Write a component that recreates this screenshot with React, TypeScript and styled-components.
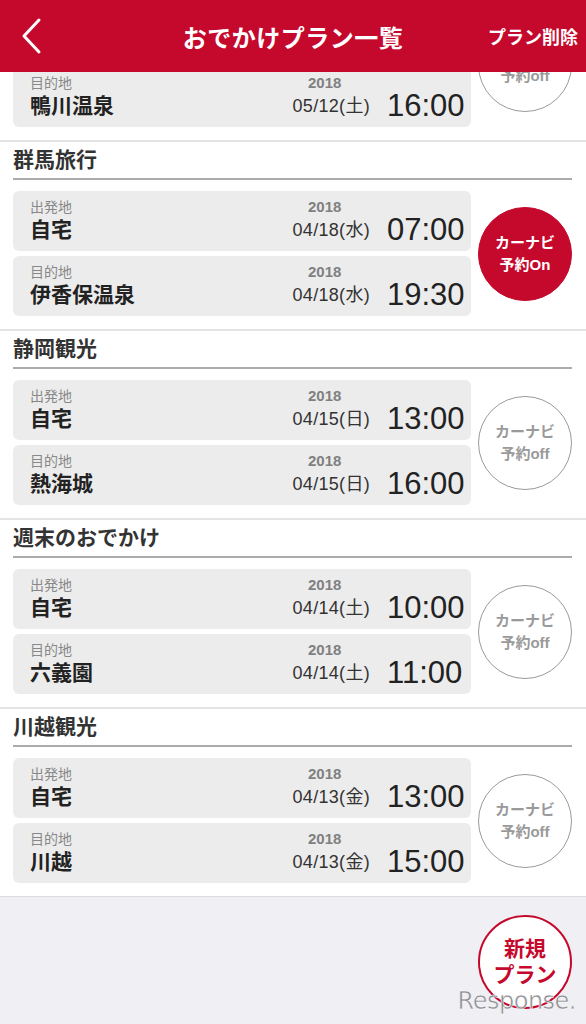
import { useLayoutEffect, useRef } from "react"
import styled, { createGlobalStyle } from "styled-components"

const RED = "#c5092d"

const GlobalStyle = createGlobalStyle`
  html, body {
    margin: 0;
    padding: 0;
    overflow: hidden;
    background: #ffffff;
  }
  body {
    font-family: "Liberation Sans", "Noto Sans CJK JP", sans-serif;
  }
`

const Screen = styled.div`
  width: 586px;
  height: 1024px;
  display: flex;
  flex-direction: column;
  overflow: hidden;
`

const Header = styled.header`
  position: relative;
  z-index: 1;
  flex: 0 0 72px;
  display: grid;
  grid-template-columns: 100px 1fr 100px;
  align-items: center;
  background: ${RED};
  color: #ffffff;
`

const BackButton = styled.button`
  display: flex;
  align-items: center;
  padding: 0 0 0 20px;
  height: 72px;
  border: none;
  background: none;
  cursor: pointer;
`

const Title = styled.h1`
  margin: 0;
  text-align: center;
  font-size: 24px;
  font-weight: 700;
  letter-spacing: 0.5px;
`

const DeleteButton = styled.button`
  justify-self: end;
  padding: 0 8px 0 0;
  border: none;
  background: none;
  color: #ffffff;
  font-family: inherit;
  font-size: 18px;
  font-weight: 700;
  white-space: nowrap;
`

const Scroller = styled.div`
  flex: 1;
  overflow-y: auto;
  scrollbar-width: none;
  &::-webkit-scrollbar {
    display: none;
  }
`

const Section = styled.section`
  border-top: 2px solid #e4e4e4;
  padding: 0 14px 13px 13px;
  background: #ffffff;
`

const SectionTitle = styled.h2`
  margin: 0;
  height: 36px;
  line-height: 36px;
  font-size: 21px;
  font-weight: 700;
  color: #333333;
  border-bottom: 2px solid #ababab;
`

const Body = styled.div`
  display: flex;
  align-items: center;
  gap: 7px;
  margin-top: 11px;
`

const Cards = styled.div`
  flex: 1;
  display: flex;
  flex-direction: column;
  gap: 5px;
`

const Card = styled.div`
  height: 60px;
  box-sizing: border-box;
  display: flex;
  align-items: flex-start;
  padding: 8px 0 0 17px;
  background: #ececec;
  border-radius: 6px;
`

const Place = styled.div`
  flex: 1;
  display: flex;
  flex-direction: column;
`

const Label = styled.span`
  font-size: 14px;
  line-height: 16px;
  color: #888888;
`

const Name = styled.span`
  font-size: 21px;
  line-height: 30px;
  font-weight: 700;
  color: #222222;
`

const DateCol = styled.div`
  width: 86px;
  display: flex;
  flex-direction: column;
  align-items: flex-end;
  margin-right: 17px;
`

const Year = styled.span`
  width: 62px;
  text-align: left;
  font-size: 15px;
  line-height: 16px;
  font-weight: 700;
  color: #808080;
`

const DateText = styled.span`
  font-size: 18px;
  letter-spacing: 0.3px;
  line-height: 30px;
  color: #333333;
  white-space: nowrap;
`

const Time = styled.span`
  width: 84px;
  margin-top: 16px;
  font-size: 31px;
  line-height: 30px;
  color: #222222;
`

const NaviButton = styled.button<{ $on: boolean }>`
  flex: 0 0 94px;
  height: 94px;
  box-sizing: border-box;
  border-radius: 50%;
  border: 1.5px solid ${(p) => (p.$on ? RED : "#9a9a9a")};
  background: ${(p) => (p.$on ? RED : "#ffffff")};
  color: ${(p) => (p.$on ? "#ffffff" : "#9a9a9a")};
  font-family: inherit;
  font-size: 15px;
  font-weight: 700;
  line-height: 22px;
  padding: 0;
`

const Footer = styled.div`
  position: relative;
  height: 128px;
  box-sizing: border-box;
  border-top: 1px solid #dcdce0;
  background: #efeff4;
  display: flex;
  justify-content: flex-end;
  padding: 18px 14px 0 0;
`

const NewPlanButton = styled.button`
  width: 94px;
  height: 94px;
  box-sizing: border-box;
  border-radius: 50%;
  border: 2.5px solid ${RED};
  background: #ffffff;
  color: ${RED};
  font-family: inherit;
  font-size: 21px;
  font-weight: 700;
  line-height: 26px;
  padding: 0;
`

const Watermark = styled.span`
  position: absolute;
  right: 10px;
  bottom: 9px;
  font-family: "DejaVu Sans", sans-serif;
  font-size: 24px;
  letter-spacing: -0.5px;
  color: #8c8c91;
  -webkit-text-stroke: 0.5px #ffffff;
`

type Stop = { label: string; name: string; date: string; time: string }
type Plan = { title: string; on: boolean; stops: Stop[] }

const plans: Plan[] = [
  {
    title: "房総旅行",
    on: false,
    stops: [
      { label: "出発地", name: "自宅", date: "05/12(土)", time: "13:00" },
      { label: "目的地", name: "鴨川温泉", date: "05/12(土)", time: "16:00" },
    ],
  },
  {
    title: "群馬旅行",
    on: true,
    stops: [
      { label: "出発地", name: "自宅", date: "04/18(水)", time: "07:00" },
      { label: "目的地", name: "伊香保温泉", date: "04/18(水)", time: "19:30" },
    ],
  },
  {
    title: "静岡観光",
    on: false,
    stops: [
      { label: "出発地", name: "自宅", date: "04/15(日)", time: "13:00" },
      { label: "目的地", name: "熱海城", date: "04/15(日)", time: "16:00" },
    ],
  },
  {
    title: "週末のおでかけ",
    on: false,
    stops: [
      { label: "出発地", name: "自宅", date: "04/14(土)", time: "10:00" },
      { label: "目的地", name: "六義園", date: "04/14(土)", time: "11:00" },
    ],
  },
  {
    title: "川越観光",
    on: false,
    stops: [
      { label: "出発地", name: "自宅", date: "04/13(金)", time: "13:00" },
      { label: "目的地", name: "川越", date: "04/13(金)", time: "15:00" },
    ],
  },
]

function PlanSection({ plan }: { plan: Plan }) {
  return (
    <Section>
      <SectionTitle>{plan.title}</SectionTitle>
      <Body>
        <Cards>
          {plan.stops.map((s) => (
            <Card key={s.label}>
              <Place>
                <Label>{s.label}</Label>
                <Name>{s.name}</Name>
              </Place>
              <DateCol>
                <Year>2018</Year>
                <DateText>{s.date}</DateText>
              </DateCol>
              <Time>{s.time}</Time>
            </Card>
          ))}
        </Cards>
        <NaviButton $on={plan.on}>
          カーナビ
          <br />
          {plan.on ? "予約On" : "予約off"}
        </NaviButton>
      </Body>
    </Section>
  )
}

export default function App() {
  const scroller = useRef<HTMLDivElement>(null)

  // the list is shown scrolled a little way down
  useLayoutEffect(() => {
    if (scroller.current) scroller.current.scrollTop = 121
  }, [])

  return (
    <Screen>
      <GlobalStyle />
      <Header>
        <BackButton aria-label="戻る">
          <svg width="22" height="38" viewBox="0 0 22 38">
            <polyline
              points="19,3 4,19 19,35"
              fill="none"
              stroke="#ffffff"
              strokeWidth="3"
              strokeLinecap="round"
              strokeLinejoin="round"
            />
          </svg>
        </BackButton>
        <Title>おでかけプラン一覧</Title>
        <DeleteButton>プラン削除</DeleteButton>
      </Header>
      <Scroller ref={scroller}>
        {plans.map((p) => (
          <PlanSection key={p.title} plan={p} />
        ))}
        <Footer>
          <NewPlanButton>
            新規
            <br />
            プラン
          </NewPlanButton>
          <Watermark>Response.</Watermark>
        </Footer>
      </Scroller>
    </Screen>
  )
}
